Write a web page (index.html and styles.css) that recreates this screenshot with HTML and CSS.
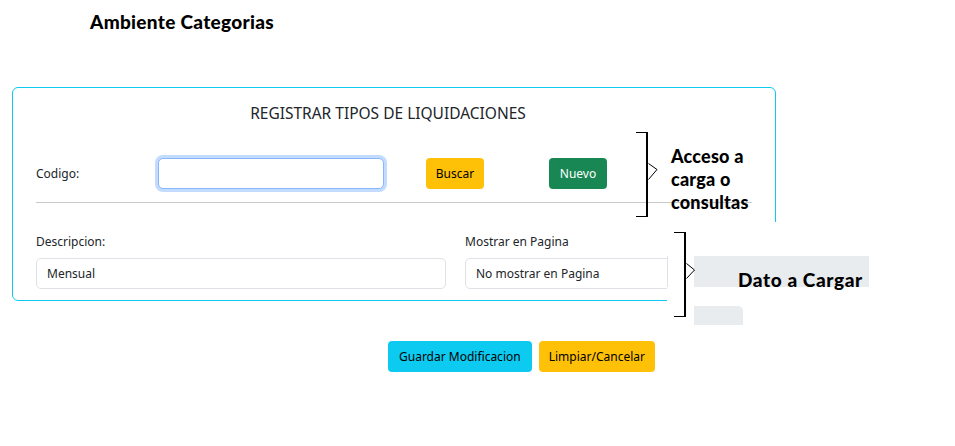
FILE: index.html
```html
<!DOCTYPE html>
<html lang="es">
<head>
    <meta charset="UTF-8">
    <meta name="viewport" content="width=device-width, initial-scale=1.0">
    <title>Ambiente Categorias</title>
    <link rel="stylesheet" href="styles.css">
</head>
<body>
    <h1 class="page-title">Ambiente Categorias</h1>

    <!-- formulario principal -->
    <section class="form-card">
        <h2 class="form-card-title">REGISTRAR TIPOS DE LIQUIDACIONES</h2>

        <div class="search-row">
            <label for="codigo">Codigo:</label>
            <div><input id="codigo" class="input input-focus" type="text"></div>
            <div><button class="btn btn-warning">Buscar</button></div>
            <div><button class="btn btn-success">Nuevo</button></div>
        </div>

        <hr class="divider">

        <div class="data-row">
            <div class="field">
                <label for="descripcion">Descripcion:</label>
                <input id="descripcion" class="input" type="text" value="Mensual">
            </div>
            <div class="field">
                <label for="mostrar">Mostrar en Pagina</label>
                <div id="mostrar" class="input select">No mostrar en Pagina</div>
            </div>
        </div>
    </section>

    <div class="actions">
        <button class="btn btn-info">Guardar Modificacion</button>
        <button class="btn btn-warning">Limpiar/Cancelar</button>
    </div>

    <!-- notas sobre el formulario -->
    <div class="note note-access">
        <div class="bracket"></div>
        <svg class="bracket-tip" width="10" height="17" viewBox="0 0 10 17">
            <polyline points="0.5,0.5 9,6.5 0.5,16.5" fill="none" stroke="#000" stroke-width="1"/>
        </svg>
        <p class="note-text">Acceso a<br>carga o<br>consultas</p>
    </div>

    <div class="note note-data">
        <div class="note-edge"></div>
        <div class="note-band"><span>Dato a Cargar</span></div>
        <div class="bracket"></div>
        <svg class="bracket-tip" width="10" height="16" viewBox="0 0 10 16">
            <polyline points="0.5,0.5 8.5,7 0.5,15.5" fill="none" stroke="#000" stroke-width="1"/>
        </svg>
        <div class="note-tab"></div>
    </div>
</body>
</html>
```

FILE: styles.css
```css
/* base */
body {
    margin: 0;
    font-family: "Noto Sans", "Open Sans", sans-serif;
    font-size: 12px;
    color: #212529;
    background: #fff;
}

.page-title {
    margin: 0;
    padding: 11px 0 0 90px;
    font-family: "Lato", "DejaVu Sans", sans-serif;
    font-size: 19px;
    font-weight: 900;
    letter-spacing: 0.3px;
    line-height: 22px;
    color: #000;
}

/* tarjeta del formulario */
.form-card {
    box-sizing: border-box;
    width: 764px;
    margin: 54px 0 0 12px;
    padding: 15px 23px 11px;
    border: 1px solid #0dcaf0;
    border-radius: 6px;
}

.form-card-title {
    margin: 0;
    font-size: 15.5px;
    font-weight: 400;
    line-height: 20px;
    text-align: center;
    padding-right: 12px;
}

.search-row {
    display: grid;
    grid-template-columns: 122px 268px 123px auto;
    align-items: center;
    margin-top: 35px;
    height: 31px;
}

.divider {
    margin: 13px 0 0;
    border: 0;
    border-top: 1px solid #c9c9c9;
}

.data-row {
    display: grid;
    grid-template-columns: 410px 1fr;
    column-gap: 19px;
    margin-top: 30px;
}

.field label {
    display: block;
    line-height: 18px;
    margin-bottom: 7px;
}

/* controles */
.input {
    box-sizing: border-box;
    display: block;
    width: 100%;
    height: 31px;
    padding: 0 10px;
    font: inherit;
    line-height: 29px;
    color: #212529;
    background: #fff;
    border: 1px solid #dee2e6;
    border-radius: 5px;
    outline: none;
}

.input-focus {
    width: 226px;
    border-color: #86b7fe;
    box-shadow: 0 0 0 3px rgba(13, 110, 253, 0.25);
}

.btn {
    height: 31px;
    padding: 0 10px;
    font: inherit;
    border: none;
    border-radius: 4px;
    cursor: pointer;
}

.btn-warning {
    background-color: #ffc107;
    color: #000;
}

.btn-success {
    background-color: #198754;
    color: #fff;
}

.btn-info {
    background-color: #0dcaf0;
    color: #000;
}

.search-row .btn {
    width: 58px;
    padding: 0;
}

.actions {
    display: flex;
    gap: 7px;
    margin-top: 40px;
    padding-left: 388px;
}

.actions .btn-info {
    padding: 0 11px;
}

/* notas */
.note {
    position: absolute;
}

.note .bracket {
    position: absolute;
    border: 1px solid #000;
    border-left: none;
}

.note .bracket-tip {
    position: absolute;
}

.note-access {
    left: 636px;
    top: 132px;
    width: 130px;
    height: 86px;
}

.note-access .bracket {
    left: 0;
    top: 0;
    width: 10px;
    height: 83px;
    border-right-width: 2px;
}

.note-access .bracket-tip {
    left: 12px;
    top: 31px;
}

.note-text {
    position: absolute;
    left: 35px;
    top: 13px;
    margin: 0;
    font-family: "Lato", "DejaVu Sans", sans-serif;
    font-size: 18px;
    font-weight: 900;
    letter-spacing: 0.2px;
    line-height: 23px;
    color: #000;
}

.note-data {
    left: 667px;
    top: 222px;
    width: 203px;
    height: 103px;
    background: #fff;
}

.note-edge {
    position: absolute;
    left: 0;
    top: 34px;
    width: 1px;
    height: 31px;
    background: #dee2e6;
}

.note-band {
    position: absolute;
    left: 27px;
    top: 34px;
    width: 175px;
    height: 31px;
    background: #e9ecef;
}

.note-band span {
    position: absolute;
    left: 44px;
    top: 13px;
    font-family: "Lato", "DejaVu Sans", sans-serif;
    font-size: 19px;
    font-weight: 900;
    letter-spacing: 0.6px;
    line-height: 22px;
    color: #000;
    white-space: nowrap;
}

.note-data .bracket {
    left: 7px;
    top: 10px;
    width: 10px;
    height: 83px;
    border-right-width: 2px;
}

.note-data .bracket-tip {
    left: 19px;
    top: 41px;
}

.note-tab {
    position: absolute;
    left: 27px;
    top: 84px;
    width: 49px;
    height: 19px;
    background: #e9ecef;
    border-radius: 0 5px 0 0;
}
```
